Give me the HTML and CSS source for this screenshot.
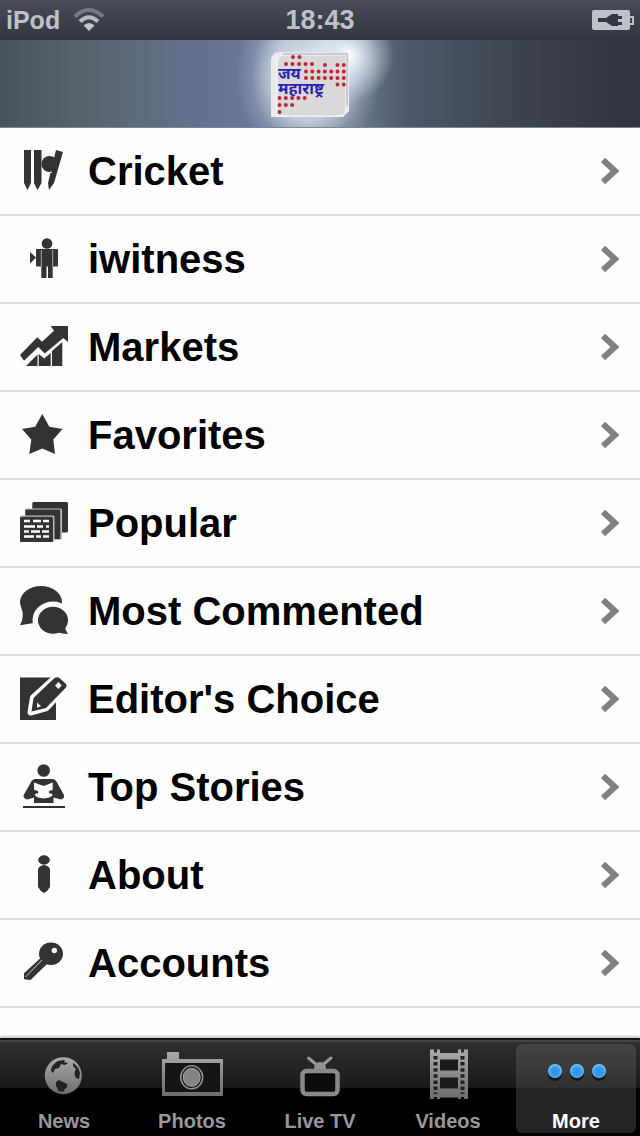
FILE: index.html
```html
<!DOCTYPE html>
<html lang="en">
<head>
<meta charset="utf-8">
<meta name="viewport" content="width=device-width, initial-scale=1">
<title>More</title>
<link rel="stylesheet" href="styles.css">
</head>
<body>
<div class="status">
  <div class="carrier"><span class="device">iPod</span>
    <svg width="32" height="24" viewBox="0 0 32 24" fill="none"><path d="M2 8.500Q16-4.500 30 8.500" stroke="#777a84" stroke-width="4"/><path d="M7 13.500Q16 5 25 13.500" stroke="#b9bbc2" stroke-width="4"/><path d="M10.500 17.500Q16 12.500 21.500 17.500L16 23Z" fill="#c3c5cc"/></svg>
  </div>
  <time class="clock">18:43</time>
  <svg class="battery" width="42" height="20" viewBox="0 0 42 20"><rect width="38" height="20" rx="2" fill="#bfc1c8"/><path d="M38 7h3v7h-3" fill="none" stroke="#bfc1c8" stroke-width="2"/><path d="M6 8h8l6-4h6v2h4v3h-4v3h4v3h-4v1h-6l-6-4H6z" fill="#343743"/></svg>
</div>
<header class="banner">
  <svg class="logo" width="100" height="88" viewBox="0 0 100 88">
    <path d="M11 77V20q1-8 9-8h67q2 0 2 2v57l-6 6z" fill="#e9ebef"/>
    <path d="M17 76V22q1-7 7-7h62v54q-1 7-8 7z" fill="#dad8d9"/>
    <path d="M17 76V22q1-7 7-7h62v56q-1 5-6 5z" fill="none" stroke="#fafafa"/>
    <path d="M23 14h64v52" fill="none" stroke="#a5a8b0"/>
    <g class="dots" stroke="#bd2637" stroke-width="4" stroke-linecap="round">
      <path stroke-dasharray="0 6.500" d="M33 17h7M26 24h27"/>
      <path stroke-dasharray="0 6.300" d="M65 25h1M77.500 25h7M46 31.500h39M46 38h39M77.500 44.500h7M19.500 58h27M19.500 65h14M19.500 72h1"/>
    </g>
    <text class="wordmark"><tspan x="18" y="39">जय</tspan> <tspan x="18" y="54">महाराष्ट्र</tspan></text>
  </svg>
</header>
<main>
<ul class="menu">
  <li><a href="#cricket"><svg class="icon" viewBox="0 0 48 48"><path d="M4 3h7v33l-3.500 7L4 36zM14 3h7.500v33l-4 7-3.500-7zM36 3l7 2-9 31-5 7-1-7z"/><circle cx="29.500" cy="17" r="8"/><path d="M27 26l5-1" stroke="#fff" stroke-width="1"/></svg><span>Cricket</span><svg class="chevron" viewBox="0 0 20 28"><path d="M3 3l12 11L3 25"/></svg></a></li>
  <li><a href="#iwitness"><svg class="icon" viewBox="0 0 48 48"><circle cx="27" cy="8.500" r="5.300"/><path d="M10 17l6 5.500-6 6z"/><rect x="16" y="14" width="22" height="17.500" rx="1"/><path d="M21.300 14h11.400v29H28V30h-1.500v13h-5.200z"/><path d="M21.300 15v17M32.700 15v17" stroke="#aaa"/></svg><span>iwitness</span><svg class="chevron" viewBox="0 0 20 28"><path d="M3 3l12 11L3 25"/></svg></a></li>
  <li><a href="#markets"><svg class="icon" viewBox="0 0 48 48"><path d="M0 32l17.300-17.700 4.700 4.500L34 7.700 30.700 3H48v16l-4.700-4-18.600 15.500-6.400-6.500L4 37.700zM6 43l11.500-11.500V43zM18.700 31l5.500 4.500 6.500-5.500v13h-12zM32 28l10.300-9v24H32z"/></svg><span>Markets</span><svg class="chevron" viewBox="0 0 20 28"><path d="M3 3l12 11L3 25"/></svg></a></li>
  <li><a href="#favorites"><svg class="icon" viewBox="0 0 48 48"><path d="M22.300 3l7 12.800L42.500 18l-9.200 10.500L35 43l-12.700-5.500L9.300 43l2-14.500L2 18l13.200-2.200z"/></svg><span>Favorites</span><svg class="chevron" viewBox="0 0 20 28"><path d="M3 3l12 11L3 25"/></svg></a></li>
  <li><a href="#popular"><svg class="icon" viewBox="0 0 48 48"><rect x="12.300" y="3" width="35.700" height="30.500" rx="1.500"/><rect x="5" y="9.500" width="37" height="31.500" rx="1.500" fill="#bbb"/><rect x="5.300" y="10.500" width="35" height="29.500" rx="1"/><rect x="0" y="16.500" width="34.500" height="26.500" rx="1.500" fill="#bbb"/><rect y="17.700" width="33" height="25.300" rx="1.500"/><path stroke="#fff" stroke-width="2.600" d="M4 22h6m3 0h8m2 0h6M4 27.500h11m2 0h6m3 0h3M4 32.500h5m2 0h9m2 0h7M4 37.500h10m2 0h5m2 0h6"/></svg><span>Popular</span><svg class="chevron" viewBox="0 0 20 28"><path d="M3 3l12 11L3 25"/></svg></a></li>
  <li><a href="#commented"><svg class="icon" viewBox="0 0 48 48"><ellipse cx="21" cy="15" rx="21" ry="16"/><path d="M1 20q4 9-1 18.300l12.500-2L22 27z"/><ellipse cx="33" cy="33" rx="20.500" ry="18.500" fill="#fefefe"/><ellipse cx="33" cy="33.200" rx="15" ry="13.500"/><path d="M45 39q0 4 3 8-5 0-12-2z"/></svg><span>Most Commented</span><svg class="chevron" viewBox="0 0 20 28"><path d="M3 3l12 11L3 25"/></svg></a></li>
  <li><a href="#editor"><svg class="icon" viewBox="0 0 48 48"><path d="M0 2.500h36V45H0z"/><path d="M10.500 37.500l2.500-15L34 3.500q3-2.500 6 0l5.500 5q2 2 0 4.500L26.500 33z" fill="#fefefe" stroke="#fefefe" stroke-width="6" stroke-linejoin="round"/><path d="M11.500 36.500l2-13.500L34 3.500q3-2.500 6 0l5.500 5q2 2 0 4.500L26 33z"/><path d="M38.500 7l3.200 3.500-3.200 3.500-3.500-3.500zM17 27.500l4 3.800-4 1.500z" fill="#fff"/></svg><span>Editor's Choice</span><svg class="chevron" viewBox="0 0 20 28"><path d="M3 3l12 11L3 25"/></svg></a></li>
  <li><a href="#stories"><svg class="icon" viewBox="0 0 48 48"><circle cx="23.700" cy="7.500" r="6.300"/><path d="M14.500 16h18.800q3 1 4 4l6.700 12q1 3-3 4.500l-7.500-2V40H14v-5.500l-6.500 2Q2 35 4 31.500L10.500 20q1-3 4-4z"/><path d="M14 19.500l9.700 3.500 9-3.500v7.500q-6 1-3 3.500 3-.5 3 1.500-2 3-9 3.500-7-.5-9-3.500 0-2 3-1.500 3-2.500-3.500-3.500z" fill="#fff"/><rect x="3" y="43" width="42" height="2"/></svg><span>Top Stories</span><svg class="chevron" viewBox="0 0 20 28"><path d="M3 3l12 11L3 25"/></svg></a></li>
  <li><a href="#about"><svg class="icon" viewBox="0 0 48 48"><ellipse cx="24" cy="9" rx="5.800" ry="4.700"/><path d="M18 18.500q1-4 6-4.500 5 .5 6 4.500V36q-2 4-6 6-4-2-6-6z"/></svg><span>About</span><svg class="chevron" viewBox="0 0 20 28"><path d="M3 3l12 11L3 25"/></svg></a></li>
  <li><a href="#accounts"><svg class="icon" viewBox="0 0 48 48"><ellipse cx="31" cy="14.700" rx="12" ry="11.300"/><path d="M20 19.500L4 34.300v6l6.500.7L27 25z"/><path d="M22 21L5.500 38" stroke="#ccc"/><circle cx="34.300" cy="11.500" r="2.700" fill="#fff"/></svg><span>Accounts</span><svg class="chevron" viewBox="0 0 20 28"><path d="M3 3l12 11L3 25"/></svg></a></li>
</ul>
</main>
<nav class="tabs">
  <a href="#news"><svg viewBox="0 0 64 60"><defs><linearGradient id="metal" x2="0" y2="1"><stop stop-color="#aaa"/><stop offset="1" stop-color="#6c6c6e"/></linearGradient></defs><circle cx="31.300" cy="31.700" r="18.500" fill="url(#metal)"/><path d="M19 27q0-6 7-10l7-1-1 2 4 1-3 2-4-1-2 4-4 1-2 4zM41 19q6 4 7 10l-1 6-3-1q-3-5 0-9l-3-3zM24 38l3-2 8 4q1 3-2 5l-2 3-5-1q0-3-2-5z" fill="#222224"/></svg><span>News</span></a>
  <a href="#photos"><svg viewBox="0 0 64 60"><path d="M7 8h12v7h44v37H2V15h5z" fill="url(#metal)"/><path d="M5 19h55v29H5z" fill="#151516"/><ellipse cx="31.700" cy="33.300" rx="11" ry="11.500" fill="none" stroke="#929294" stroke-width="1.500"/><ellipse cx="31.700" cy="33.300" rx="8.500" ry="9" fill="#848486" stroke="#aaa"/></svg><span>Photos</span></a>
  <a href="#live"><svg viewBox="0 0 64 60"><rect x="14.500" y="27" width="35" height="23" rx="4" fill="#0c0c0d" stroke="#89898b" stroke-width="4.500"/><path d="M20.500 14l9 7.500M43 14l-9 7.500" stroke="#98989a" stroke-width="3" stroke-linecap="round"/><path d="M26 25q0-7 6-7t6 7z" fill="#929294"/></svg><span>Live TV</span></a>
  <a href="#videos"><svg viewBox="0 0 64 60"><path d="M14 5.500h4v3h3v-3h3V9h18V5.500h3v3h3v-3h4V55h-4v-2h-3v2h-3v-1.500H24V55h-3v-2h-3v2h-4z" fill="url(#metal)"/><path d="M24 15.500h18v11H24zM24 33.500h18v11H24z" fill="#1b1b1c"/><path d="M19.500 12v38M46.500 12v38" stroke="#202021" stroke-width="4" stroke-dasharray="3.500 2.600"/></svg><span>Videos</span></a>
  <a href="#more" class="active" aria-current="page"><svg viewBox="0 0 64 60"><defs><radialGradient id="blue" cy=".55"><stop stop-color="#288ff0"/><stop offset=".65" stop-color="#399dea"/><stop offset="1" stop-color="#76c5f8"/></radialGradient></defs><g fill="#171719"><circle cx="11" cy="30" r="7"/><circle cx="33" cy="30" r="7"/><circle cx="55" cy="30" r="7"/></g><g fill="url(#blue)"><circle cx="11" cy="27" r="7"/><circle cx="33" cy="27" r="7"/><circle cx="55" cy="27" r="7"/></g></svg><span>More</span></a>
</nav>
</body>
</html>
```
FILE: styles.css
```css
* { box-sizing: border-box; }
body {
  margin: 0;
  min-height: 100vh;
  display: flex;
  flex-direction: column;
  background: #fefefe;
  font-family: "Liberation Sans", Arial, sans-serif;
  font-weight: bold;
}
svg { display: block; flex: none; overflow: visible; }
a { color: inherit; text-decoration: none; }

.status {
  display: grid;
  grid-template-columns: 1fr auto 1fr;
  align-items: center;
  height: 40px;
  padding: 0 6px;
  background: linear-gradient(#494b58, #333641);
  color: #bfc1c8;
}
.carrier { display: flex; align-items: center; gap: 13px; }
.device { font-size: 25px; }
.clock { font-size: 27px; }
.battery { justify-self: end; }

.banner {
  display: flex;
  justify-content: center;
  height: 88px;
  padding-right: 20px;
  border-bottom: 1px solid #7c8698;
  background:
    radial-gradient(circle 46px at calc(50% + 28px) 16px, #fff 0%, #e4eef7cc 30%, #c8d4e400 100%),
    radial-gradient(ellipse 72px 90px at calc(50% - 12px) 36px, #e4e9f1 0%, #cdd5e2dd 50%, #a4b0c466 78%, #8899b000 100%),
    linear-gradient(90deg, #47545f 0%, #57656f 14%, #62718c 30%, #6a7b99 42%, #6b798f 55%, #4b586b 64%, #424b59 74%, #3a3f4b 85%, #30343e 100%);
}
.wordmark {
  fill: #2724b4;
  font-family: "Noto Sans Devanagari", "Lohit Devanagari", "Noto Sans", sans-serif;
  font-size: 16px;
  font-weight: bold;
}

main { flex: 1; padding-bottom: 30px; }
.menu { margin: 0; padding: 0; list-style: none; }
.menu a {
  display: flex;
  align-items: center;
  height: 88px;
  padding: 0 20px;
  border-bottom: 2px solid #dcdddf;
  color: #000;
  font-size: 40px;
}
.menu span { flex: 1; padding-left: 20px; }
.icon { width: 48px; height: 48px; fill: #333336; }
.chevron { width: 20px; height: 28px; fill: none; stroke: #808082; stroke-width: 6; }

.tabs {
  display: grid;
  grid-template-columns: repeat(5, 1fr);
  height: 98px;
  padding: 4px 0;
  border-top: 2px solid #161618;
  background: linear-gradient(#454547 0 2px, #303032 2px, #19191b 48px, #000 48px);
  box-shadow: 0 -1px 3px #aaa;
  color: #98989b;
  font-size: 20px;
}
.tabs a { display: flex; flex-direction: column; align-items: center; margin: 0 4px; }
.tabs svg { width: 64px; height: 60px; }
.tabs span { line-height: 24px; margin-top: 5px; }
.tabs .active {
  border-radius: 6px;
  background: linear-gradient(#454547, #303032 44px, #252527 44px);
  color: #fff;
}
```
